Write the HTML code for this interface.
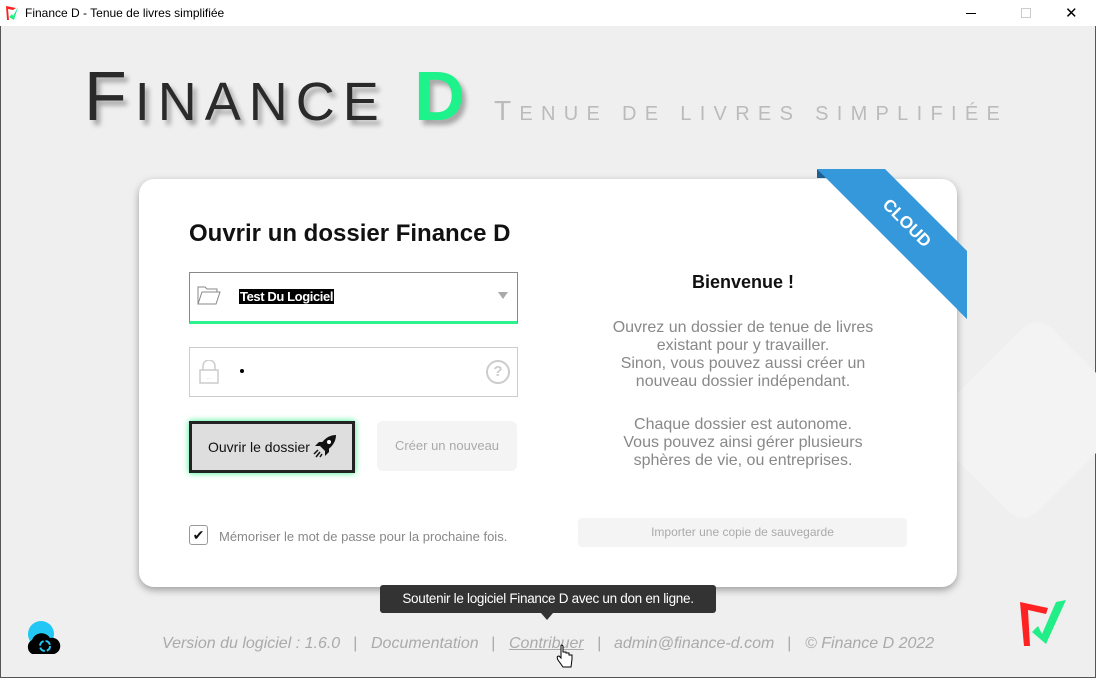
<!DOCTYPE html>
<html><head><meta charset="utf-8"><style>
*{margin:0;padding:0;box-sizing:border-box}
body{width:1096px;height:678px;overflow:hidden;background:#efefef;font-family:"Liberation Sans",sans-serif;position:relative}
.tb{position:absolute;left:0;top:0;width:1096px;height:26px;background:#fff;font-size:12px;color:#000}
.abs{position:absolute}
.card{position:absolute;left:139px;top:179px;width:818px;height:408px;background:#fff;border-radius:15px;box-shadow:0 3px 8px rgba(0,0,0,.35)}
.foot{position:absolute;top:635px;left:0;width:1096px;font-size:16px;font-style:italic;color:#aaa}
.txt{position:absolute;left:440px;width:328px;text-align:center;font-size:16px;color:#888;line-height:18px}
</style></head><body>
<div class="tb">
 <svg class="abs" style="left:5px;top:5px" width="14" height="16" viewBox="0 0 14 16"><path d="M1 1 L11 3 L8 5 L3 4 L4 15 L2 15Z" fill="#f22"/><path d="M4 12 L7 9 L8 11 L13 2 L9 15Z" fill="#2e8"/></svg>
 <div class="abs" style="left:25px;top:6px">Finance D - Tenue de livres simplifiée</div>
 <div class="abs" style="left:966px;top:13px;width:10px;height:1px;background:#000"></div>
 <div class="abs" style="left:1021px;top:8px;width:10px;height:10px;border:1px solid #ccc"></div>
 <div class="abs" style="left:1065px;top:4px;font-size:15px">✕</div>
</div>
<div class="abs" style="left:0;top:26px;width:1px;height:652px;background:#555"></div>
<div class="abs" style="right:0;top:26px;width:1px;height:652px;background:#555"></div>
<div class="abs" style="left:0;bottom:0;width:1096px;height:1px;background:#555"></div>

<div class="abs" style="left:84px;top:56px;font-size:70px;color:#2a2a2a;letter-spacing:8px;text-shadow:4px 5px 5px rgba(0,0,0,.3);line-height:80px;white-space:nowrap">F<span style="font-size:54px">INANCE</span> <span style="color:#1ef28a;font-weight:bold">D</span></div>
<div class="abs" style="left:494px;top:96px;font-size:28px;color:#bbb;letter-spacing:8.3px;line-height:30px;white-space:nowrap">T<span style="font-size:20px">ENUE DE LIVRES SIMPLIFIÉE</span></div>

<div class="abs" style="left:960px;top:340px;width:140px;height:160px;background:#f3f3f3;transform:rotate(45deg);border-radius:20px"></div>

<div class="card">
 <div class="abs" style="left:50px;top:41px;font-size:24px;font-weight:bold;color:#111">Ouvrir un dossier Finance D</div>
 <div class="abs" style="left:50px;top:93px;width:329px;height:52px;border:1px solid #888;border-bottom:3px solid #2ef28e"></div>
 <svg class="abs" style="left:58px;top:106px" width="24" height="20" viewBox="0 0 24 20"><path d="M1 19 V2 H8 L10 4 H20 V7 M1 19 L5 7 H23 L19 19Z" fill="none" stroke="#888" stroke-width="1"/></svg>
 <div class="abs" style="left:100px;top:110px;background:#000;color:#fff;font-size:13px;font-weight:bold;padding:0 1px;letter-spacing:-0.4px">Test Du Logiciel</div>
 <div class="abs" style="left:359px;top:113px;width:0;height:0;border-left:5px solid transparent;border-right:5px solid transparent;border-top:7px solid #aaa"></div>
 <div class="abs" style="left:50px;top:168px;width:329px;height:50px;border:1px solid #ccc"></div>
 <svg class="abs" style="left:60px;top:181px" width="20" height="24" viewBox="0 0 20 24"><path d="M4 10 V6 a6 6 0 0 1 12 0 V10" fill="none" stroke="#ccc" stroke-width="1.5"/><rect x="1" y="10" width="18" height="13" fill="none" stroke="#ccc" stroke-width="1.5"/><text x="10" y="19" font-size="6" fill="#ccc" text-anchor="middle">...</text></svg>
 <div class="abs" style="left:101px;top:190px;width:4px;height:4px;border-radius:2px;background:#000"></div>
 <div class="abs" style="left:347px;top:181px;width:24px;height:24px;border:2px solid #ccc;border-radius:50%;color:#ccc;font-size:15px;font-weight:bold;text-align:center;line-height:20px">?</div>
 <div class="abs" style="left:50px;top:242px;width:166px;height:52px;background:#dedede;border:3px solid #222;box-shadow:0 0 6px #2ef28e"></div>
 <div class="abs" style="left:69px;top:260px;font-size:14px;color:#111">Ouvrir le dossier</div>
 <svg class="abs" style="left:173px;top:254px" width="26" height="26" viewBox="0 0 26 26"><path d="M24 2 C16 2 10 8 8 13 L13 18 C18 16 24 10 24 2Z" fill="#111"/><circle cx="17" cy="9" r="2" fill="#fff"/><path d="M8 13 L3 13 L7 9 L11 9Z M13 18 L13 23 L17 19 L17 15Z" fill="#111"/><path d="M6 17 L2 21 M8 19 L4 24 M10 21 L8 24" stroke="#111" stroke-width="1.5"/></svg>
 <div class="abs" style="left:238px;top:242px;width:140px;height:50px;background:#f4f4f4;border-radius:6px;color:#aaa;font-size:13px;text-align:center;line-height:50px">Créer un nouveau</div>
 <div class="abs" style="left:50px;top:346px;width:19px;height:20px;border:1px solid #999;border-radius:3px;font-size:14px;text-align:center;line-height:18px;color:#111">✔</div>
 <div class="abs" style="left:80px;top:350px;font-size:13px;color:#888">Mémoriser le mot de passe pour la prochaine fois.</div>

 <div class="abs" style="left:440px;top:93px;width:328px;text-align:center;font-size:18px;font-weight:bold;color:#111">Bienvenue !</div>
 <div class="txt" style="top:140px">Ouvrez un dossier de tenue de livres<br>existant pour y travailler.<br>Sinon, vous pouvez aussi créer un<br>nouveau dossier indépendant.</div>
 <div class="txt" style="top:237px">Chaque dossier est autonome.<br>Vous pouvez ainsi gérer plusieurs<br>sphères de vie, ou entreprises.</div>
 <div class="abs" style="left:439px;top:339px;width:329px;height:29px;background:#f4f4f4;border-radius:4px;color:#aaa;font-size:12px;text-align:center;line-height:29px">Importer une copie de sauvegarde</div>
</div>

<svg class="abs" style="left:817px;top:169px" width="150" height="150" viewBox="0 0 150 150"><polygon points="0,0 10,9 0,9" fill="#1f5f8f"/><polygon points="150,140 150,150 141,141" fill="#1f5f8f"/><polygon points="0,0 68,0 150,82 150,150" fill="#3598db"/><text x="0" y="0" transform="translate(86,58) rotate(45)" font-family="Liberation Sans" font-weight="bold" font-size="17" fill="#fff" text-anchor="middle">CLOUD</text></svg>

<div class="abs" style="left:380px;top:585px;width:336px;height:28px;background:#333;border-radius:3px;color:#fff;font-size:13.5px;text-align:center;line-height:28px;letter-spacing:-0.3px">Soutenir le logiciel Finance D avec un don en ligne.</div>
<div class="abs" style="left:541px;top:613px;width:0;height:0;border-left:6px solid transparent;border-right:6px solid transparent;border-top:7px solid #333"></div>

<div class="foot"><span class="abs" style="left:162px">Version du logiciel : 1.6.0</span><span class="abs" style="left:353px">|</span><span class="abs" style="left:371px">Documentation</span><span class="abs" style="left:491px">|</span><span class="abs" style="left:509px;text-decoration:underline">Contribuer</span><span class="abs" style="left:597px">|</span><span class="abs" style="left:614px">admin@finance-d.com</span><span class="abs" style="left:787px">|</span><span class="abs" style="left:805px">© Finance D 2022</span></div>

<svg class="abs" style="left:24px;top:620px" width="40" height="36" viewBox="0 0 40 36"><circle cx="17" cy="14" r="13" fill="#22c7f5"/><path d="M8 34 a8 8 0 0 1 0 -14 a10 10 0 0 1 18 -2 a8 8 0 0 1 4 16Z" fill="#000"/><circle cx="21" cy="26" r="5" fill="none" stroke="#22c7f5" stroke-width="2" stroke-dasharray="6 2"/></svg>
<svg class="abs" style="left:1018px;top:598px" width="52" height="52" viewBox="0 0 52 52"><path d="M2 4 L30 10 L28 16 L10 12 L12 48 L6 48Z" fill="#f22"/><path d="M14 34 L20 28 L24 36 L38 4 L48 2 L28 46Z" fill="#2e8"/></svg>
<svg class="abs" style="left:556px;top:644px" width="18" height="26" viewBox="0 0 18 26"><path d="M5 2 v12 l-2 -2 q-3 0 -1 4 l5 7 h8 l1 -8 v-4 h-3 v-2 h-3 v-1 h-3 v-6 q-2 -2 -2 0Z" fill="#fff" stroke="#000"/></svg>
</body></html>
